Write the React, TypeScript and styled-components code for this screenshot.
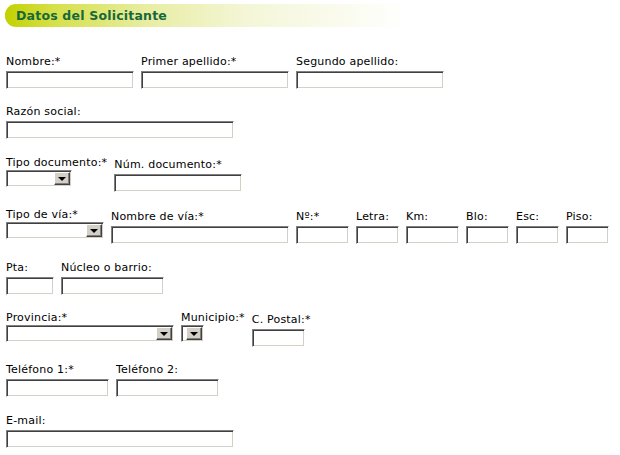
import React from 'react';
import styled, { createGlobalStyle } from 'styled-components';

const GlobalStyle = createGlobalStyle`
  html, body {
    margin: 0;
    padding: 0;
    background: #ffffff;
  }
  body {
    font-family: "DejaVu Sans", Verdana, sans-serif;
    font-size: 11px;
    letter-spacing: 0.2px;
    color: #000;
  }
`;

const Page = styled.div`
  width: 620px;
  height: 455px;
  padding: 4px 0 0 5px;
  box-sizing: border-box;
  overflow: hidden;
`;

const Header = styled.div`
  width: 405px;
  height: 23px;
  border-radius: 11px 0 0 11px;
  background: linear-gradient(
    to right,
    #c2d100 0%,
    #d6e04a 12%,
    #e8eda2 35%,
    #f4f6d8 60%,
    #ffffff 100%
  );
  display: flex;
  align-items: center;
  padding-left: 11px;
  box-sizing: border-box;
`;

const HeaderTitle = styled.h2`
  margin: 0;
  font-size: 12.5px;
  font-weight: bold;
  color: #17683a;
  letter-spacing: 0.2px;
`;

const Form = styled.div`
  display: flex;
  flex-direction: column;
  gap: 16.4px;
  padding: 28px 0 0 1px;
`;

const Row = styled.div`
  display: flex;
  align-items: flex-start;
  gap: 7px;
`;

const Field = styled.div<{ $offset?: number }>`
  display: flex;
  flex-direction: column;
  align-items: flex-start;
  margin-top: ${(p) => p.$offset ?? 0}px;
`;

const Label = styled.label<{ $tight?: boolean }>`
  display: block;
  line-height: 14px;
  height: 14px;
  margin-bottom: ${(p) => (p.$tight ? 0 : 2)}px;
  white-space: nowrap;
`;

const TextInput = styled.input<{ $w: number }>`
  width: ${(p) => p.$w}px;
  height: 18px;
  box-sizing: border-box;
  margin: 0;
  padding: 1px 2px;
  font: inherit;
  background: #fff;
  border-style: solid;
  border-width: 1px;
  border-color: #808080 #ffffff #ffffff #808080;
  box-shadow: inset 1px 1px 0 #404040, inset -1px -1px 0 #d4d0c8;
  outline: none;
`;

const SelectBox = styled.div<{ $w: number }>`
  width: ${(p) => p.$w}px;
  height: 17px;
  box-sizing: border-box;
  background: #fff;
  border-style: solid;
  border-width: 1px;
  border-color: #808080 #ffffff #ffffff #808080;
  box-shadow: inset 1px 1px 0 #404040, inset -1px -1px 0 #d4d0c8;
  display: flex;
  justify-content: flex-end;
  padding: 1px;
`;

const SelectButton = styled.div`
  width: 16px;
  height: 13px;
  box-sizing: border-box;
  background: #d4d0c8;
  border-style: solid;
  border-width: 1px;
  border-color: #ffffff #404040 #404040 #ffffff;
  box-shadow: inset -1px -1px 0 #808080;
  display: flex;
  align-items: center;
  justify-content: center;
`;

const Arrow = styled.span`
  width: 0;
  height: 0;
  border-left: 4px solid transparent;
  border-right: 4px solid transparent;
  border-top: 4px solid #000;
  margin: 1px 1px 0 0;
`;

type Item =
  | { kind: 'input'; label: string; w: number; offset?: number }
  | { kind: 'select'; label: string; w: number };

const rows: Item[][] = [
  [
    { kind: 'input', label: 'Nombre:*', w: 128 },
    { kind: 'input', label: 'Primer apellido:*', w: 148 },
    { kind: 'input', label: 'Segundo apellido:', w: 148 },
  ],
  [{ kind: 'input', label: 'Razón social:', w: 228 }],
  [
    { kind: 'select', label: 'Tipo documento:*', w: 66 },
    { kind: 'input', label: 'Núm. documento:*', w: 128, offset: 2 },
  ],
  [
    { kind: 'select', label: 'Tipo de vía:*', w: 98 },
    { kind: 'input', label: 'Nombre de vía:*', w: 178, offset: 2 },
    { kind: 'input', label: 'Nº:*', w: 53, offset: 2 },
    { kind: 'input', label: 'Letra:', w: 43, offset: 2 },
    { kind: 'input', label: 'Km:', w: 53, offset: 2 },
    { kind: 'input', label: 'Blo:', w: 43, offset: 2 },
    { kind: 'input', label: 'Esc:', w: 43, offset: 2 },
    { kind: 'input', label: 'Piso:', w: 43, offset: 2 },
  ],
  [
    { kind: 'input', label: 'Pta:', w: 48 },
    { kind: 'input', label: 'Núcleo o barrio:', w: 103 },
  ],
  [
    { kind: 'select', label: 'Provincia:*', w: 168 },
    { kind: 'select', label: 'Municipio:*', w: 23 },
    { kind: 'input', label: 'C. Postal:*', w: 53, offset: 2 },
  ],
  [
    { kind: 'input', label: 'Teléfono 1:*', w: 103 },
    { kind: 'input', label: 'Teléfono 2:', w: 103 },
  ],
  [{ kind: 'input', label: 'E-mail:', w: 228 }],
];

const Select: React.FC<{ w: number }> = ({ w }) => (
  <SelectBox $w={w}>
    <SelectButton>
      <Arrow />
    </SelectButton>
  </SelectBox>
);

export default function App() {
  return (
    <Page>
      <GlobalStyle />
      <Header>
        <HeaderTitle>Datos del Solicitante</HeaderTitle>
      </Header>
      <Form>
        {rows.map((row, i) => (
          <Row key={i}>
            {row.map((item) =>
              item.kind === 'select' ? (
                <Field key={item.label}>
                  <Label $tight>{item.label}</Label>
                  <Select w={item.w} />
                </Field>
              ) : (
                <Field key={item.label} $offset={item.offset}>
                  <Label>{item.label}</Label>
                  <TextInput type="text" $w={item.w} />
                </Field>
              )
            )}
          </Row>
        ))}
      </Form>
    </Page>
  );
}
